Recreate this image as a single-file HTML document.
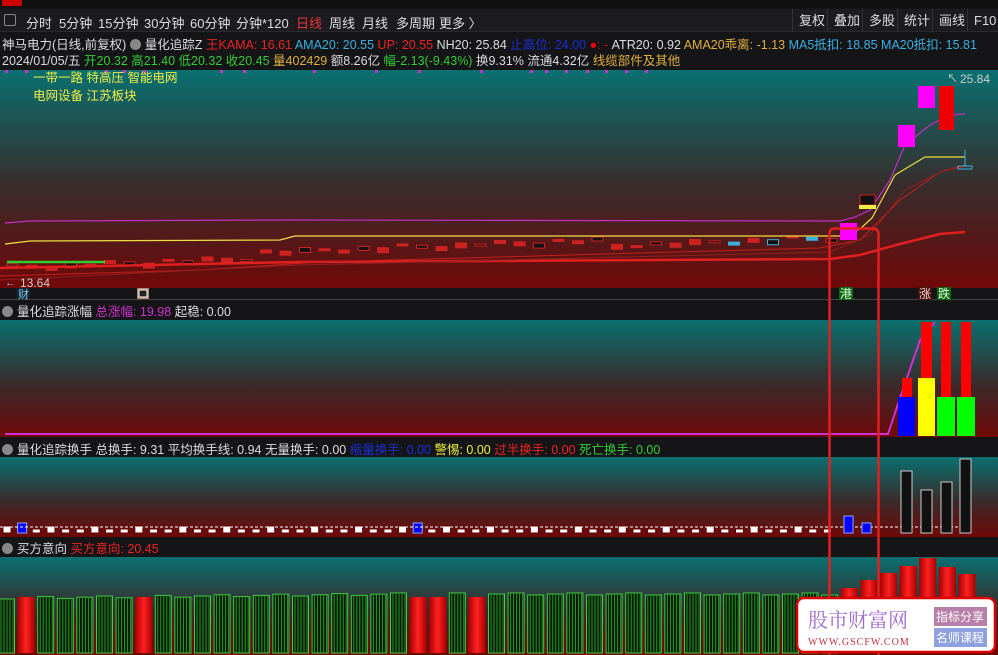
<!DOCTYPE html>
<html><head><meta charset="utf-8"><style>
*{margin:0;padding:0;box-sizing:border-box}
body{width:998px;height:655px;overflow:hidden;background:#151518;font-family:"Liberation Sans","Noto Sans CJK SC",sans-serif;font-size:12px;color:#ddd;position:relative}
.abs{position:absolute;white-space:nowrap}
#tb{left:0;top:9px;width:998px;height:23px;background:#1c1c20;border-bottom:1px solid #2a2a2e}
#tb span{position:absolute;top:4px;font-size:13px;color:#ddd}
.btn{border-left:1px solid #333;padding:0 6px;height:23px;line-height:23px;top:0!important}
.l{top:34px;font-size:12.5px}
.h{font-size:12.5px}
.cb{display:inline-block;width:11px;height:11px;border-radius:50%;background:#888;vertical-align:-1px;margin-right:4px}
</style></head><body>
<div class="abs" style="left:0;top:0;width:998px;height:8px;background:#111"></div>
<div class="abs" style="left:2px;top:0;width:20px;height:6px;background:#c00"></div>
<div id="tb" class="abs">
<span style="left:4px;top:5px;width:12px;height:12px;border:1px solid #888;border-radius:2px"></span>
<span style="left:26px">分时</span><span style="left:59px">5分钟</span><span style="left:98px">15分钟</span><span style="left:144px">30分钟</span><span style="left:190px">60分钟</span><span style="left:236px">分钟*120</span><span style="left:296px;color:#e33">日线</span><span style="left:329px">周线</span><span style="left:362px">月线</span><span style="left:396px">多周期</span><span style="left:439px">更多 〉</span>
<span class="btn" style="left:792px">复权</span><span class="btn" style="left:827px">叠加</span><span class="btn" style="left:862px">多股</span><span class="btn" style="left:897px">统计</span><span class="btn" style="left:932px">画线</span><span class="btn" style="left:967px">F10</span>
</div>
<div class="abs l" style="left:2px">神马电力(日线,前复权) <span class="cb"></span>量化追踪Z <span style="color:#e22">王KAMA: 16.61</span> <span style="color:#3ab0e0">AMA20: 20.55</span> <span style="color:#e22">UP: 20.55</span> NH20: 25.84 <span style="color:#1a2fd0">止高位: 24.00</span> <span style="color:#e00">●: -</span> ATR20: 0.92 <span style="color:#e0b040">AMA20乖离: -1.13</span> <span style="color:#3ab0e0">MA5抵扣: 18.85</span> <span style="color:#3ab0e0">MA20抵扣: 15.81</span></div>
<div class="abs l" style="left:2px;top:50px">2024/01/05/五 <span style="color:#3c3">开20.32 高21.40 低20.32 收20.45</span> <span style="color:#e0b040">量402429</span> 额8.26亿 <span style="color:#3c3">幅-2.13(-9.43%)</span> 换9.31% 流通4.32亿 <span style="color:#e0b040">线缆部件及其他</span></div>
<div class="abs h" style="left:2px;top:301px"><span class="cb"></span>量化追踪涨幅 <span style="color:#d030d0">总涨幅: 19.98</span> 起稳: 0.00</div>
<div class="abs h" style="left:2px;top:439px"><span class="cb"></span>量化追踪换手 总换手: 9.31 平均换手线: 0.94 无量换手: 0.00 <span style="color:#1a2fd0">缩量换手: 0.00</span> <span style="color:#ee4">警惕: 0.00</span> <span style="color:#e22">过半换手: 0.00</span> <span style="color:#3c3">死亡换手: 0.00</span></div>
<div class="abs h" style="left:2px;top:538px"><span class="cb"></span>买方意向 <span style="color:#e22">买方意向: 20.45</span></div>
<svg id="s" class="abs" style="left:0;top:0" width="998" height="655">
<defs>
<linearGradient id="g" x1="0" y1="0" x2="0" y2="1"><stop offset="0" stop-color="#0a7070"/><stop offset=".55" stop-color="#3a2a2a"/><stop offset="1" stop-color="#700808"/></linearGradient>
<linearGradient id="rb" x1="0" y1="0" x2="1" y2="0"><stop offset="0" stop-color="#a00"/><stop offset=".5" stop-color="#f22"/><stop offset="1" stop-color="#a00"/></linearGradient>
</defs>
<rect x="0" y="70" width="998" height="218" fill="url(#g)"/>
<rect x="0" y="320" width="998" height="117" fill="url(#g)"/>
<rect x="0" y="457" width="998" height="80" fill="url(#g)"/>
<rect x="0" y="557" width="998" height="98" fill="url(#g)"/>
<line x1="0" y1="299.5" x2="998" y2="299.5" stroke="#444"/>
<g id="dyn"></g>
<polyline fill="none" stroke="#c030c0" stroke-width="1.2" points="5,223 30,221 290,220 840,221 855,217 870,210 890,180 905,145 930,125 950,115 965,114"/>
<polyline fill="none" stroke="#eedd44" stroke-width="1.2" points="5,244 30,241 280,240 295,236 840,236 860,229 872,218 895,175 925,157 965,157"/>
<polyline fill="none" stroke="#e02020" stroke-width="2.5" points="0,268 300,262 830,259 860,255 900,244 940,234 965,232"/>
<polyline fill="none" stroke="#c02020" stroke-width="1" points="0,276 200,270 320,262 820,248 860,240 900,200 940,172 965,165"/>
<polyline fill="none" stroke="#902020" stroke-width="1" points="0,280 300,265 830,252 870,235 905,190 945,170 965,167"/>
<line x1="7" y1="262" x2="105" y2="262" stroke="#3c3" stroke-width="2.5"/>
<rect x="840" y="223" width="17" height="17" fill="#f0f"/><rect x="860" y="195" width="15" height="10" fill="#111" stroke="#c22"/><rect x="859" y="205" width="17" height="4" fill="#ee4"/>
<rect x="898" y="125" width="17" height="22" fill="#f0f"/><rect x="918" y="86" width="17" height="22" fill="#f0f"/><rect x="939" y="86" width="15" height="44" fill="#e00"/>
<rect x="958" y="166" width="14" height="3" fill="none" stroke="#3ab0e0"/><line x1="965" y1="150" x2="965" y2="166" stroke="#3ab0e0"/>
<text x="960" y="83" fill="#ccc" font-size="12">25.84</text><text x="20" y="287" fill="#ccc" font-size="12">13.64</text>
<text x="5" y="286" fill="#aac" font-size="11">←</text>
<text x="947" y="82" fill="#ccc" font-size="11">↖</text>
<text x="33" y="82" fill="#ee4" font-size="12.5">一带一路 特高压 智能电网</text>
<text x="33" y="100" fill="#ee4" font-size="12.5">电网设备 江苏板块</text>
<rect x="16" y="288" width="14" height="11" fill="#123"/><text x="18" y="298" fill="#8ce" font-size="11">财</text>
<rect x="137" y="288" width="12" height="11" fill="#a87" /><rect x="139" y="290" width="8" height="7" fill="#222" stroke="#fff"/>
<rect x="839" y="287" width="14" height="13" fill="#161"/><text x="840" y="298" fill="#dfd" font-size="12">港</text>
<rect x="918" y="287" width="14" height="13" fill="#411"/><text x="919" y="298" fill="#fcc" font-size="12">涨</text>
<rect x="937" y="287" width="14" height="13" fill="#161"/><text x="938" y="298" fill="#dfd" font-size="12">跌</text>
<polyline fill="none" stroke="#d030d0" stroke-width="2" points="5,434 888,434 900,398 920,340 935,322"/>
<rect x="898" y="397" width="17" height="39" fill="#00f"/><rect x="902" y="378" width="10" height="19" fill="#f00"/>
<rect x="918" y="378" width="17" height="58" fill="#ff0"/><rect x="921" y="322" width="11" height="56" fill="#f00"/>
<rect x="937" y="397" width="18" height="39" fill="#0f0"/><rect x="941" y="322" width="10" height="75" fill="#f00"/>
<rect x="957" y="397" width="18" height="39" fill="#0f0"/><rect x="961" y="322" width="10" height="75" fill="#f00"/>
<line x1="0" y1="527" x2="966" y2="527" stroke="#fff" stroke-dasharray="3,2"/>
<rect x="901" y="471" width="11" height="62" fill="#111" stroke="#ccc"/><rect x="921" y="490" width="11" height="43" fill="#111" stroke="#ccc"/><rect x="941" y="482" width="11" height="51" fill="#111" stroke="#ccc"/><rect x="960" y="459" width="11" height="74" fill="#111" stroke="#ccc"/>
<rect x="844" y="516" width="9" height="17" fill="#00f" stroke="#8af"/><rect x="862" y="523" width="9" height="10" fill="#00f" stroke="#8af"/>
<path d="M829.5,655 V234 Q829.5,228.5 835,228.5 H872 Q878.5,228.5 878.5,234 V655" fill="none" stroke="#e02020" stroke-width="2.5"/>
<rect x="797" y="598" width="198" height="54" rx="7" fill="#fff" stroke="#d00" stroke-width="2.5"/>
<text x="808" y="627" fill="#a06ad0" font-size="20" font-family="Noto Serif CJK SC,serif">股市财富网</text>
<text x="808" y="645" fill="#c03040" font-size="10" font-family="Liberation Serif,serif" letter-spacing="1">WWW.GSCFW.COM</text>
<rect x="934" y="607" width="53" height="19" fill="#b880a8"/><text x="936" y="621" fill="#fff" font-size="12">指标分享</text>
<rect x="934" y="628" width="53" height="19" fill="#8ea0e0"/><text x="936" y="642" fill="#fff" font-size="12">名师课程</text>
</svg>
<script>
(function(){
var d=document.getElementById('dyn'),h='';
[5,25,105,123,143,220,243,313,375,418,480,530,545,565,586,605,625,645].forEach(function(x){h+='<rect x="'+x+'" y="70" width="3" height="3" fill="#c3c"/>';});
for(var i=0;i<43;i++){var x=5+i*19.5,y=268-i*0.7-(i>12?6:0)-(i>30?-6:0)+((i*7)%5);var c=i>36&&i<42&&i%2?'#3ab0e0':'#c22';var f=(i%3==0)?'#111':c;h+='<rect x="'+(x+2)+'" y="'+(y-4)+'" width="11" height="'+(2+(i%4))+'" fill="'+f+'" stroke="'+c+'" stroke-width="1"/>';}
var bl={1:1,28:1};
for(var i=0;i<57;i++){var x=2+i*14.65;if(x>835)break;if(bl[i])h+='<rect x="'+(x+1)+'" y="523" width="9" height="10" fill="#00f" stroke="#8af"/>';else{var hh=(i%3==0)?7:4;h+='<rect x="'+(x+1)+'" y="'+(533-hh)+'" width="8" height="'+hh+'" fill="#fff" stroke="#600"/>';}}
var red={1:1,7:1,21:1,22:1,24:1},rt=[588,580,573,566,558,567,574];
for(var i=0;i<50;i++){var x=-2+i*19.6;var t;if(i>=43){t=rt[i-43];h+='<rect x="'+x+'" y="'+t+'" width="17" height="'+(653-t)+'" fill="url(#rb)"/>';}else if(red[i]){t=597;h+='<rect x="'+x+'" y="'+t+'" width="17" height="'+(653-t)+'" fill="url(#rb)"/>';}else{t=599-Math.min(i,20)*0.2-(i%3);h+='<rect x="'+(x+0.5)+'" y="'+t+'" width="16" height="'+(653-t)+'" fill="#021a02" stroke="#4c4"/>';for(var k=3;k<16;k+=3)h+='<line x1="'+(x+k)+'" y1="'+t+'" x2="'+(x+k)+'" y2="653" stroke="#2a9a2a" stroke-width="1"/>';}}
d.innerHTML=h;
})();
</script>
</body></html>
